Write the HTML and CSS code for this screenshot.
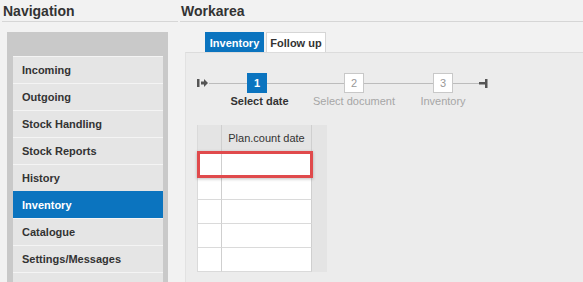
FILE: index.html
```html
<!DOCTYPE html>
<html lang="en">
<head>
    <meta charset="UTF-8">
    <title>Inventory - Workarea</title>
    <link rel="stylesheet" href="styles.css">
</head>
<body>
    <div class="layout">
        <div class="nav-column">
            <h1 class="section-title">Navigation</h1>
            <div class="nav-panel">
                <div class="nav-item">Incoming</div>
                <div class="nav-item">Outgoing</div>
                <div class="nav-item">Stock Handling</div>
                <div class="nav-item">Stock Reports</div>
                <div class="nav-item">History</div>
                <div class="nav-item active">Inventory</div>
                <div class="nav-item">Catalogue</div>
                <div class="nav-item">Settings/Messages</div>
                <div class="nav-item"></div>
            </div>
        </div>

        <div class="work-column">
            <h1 class="section-title">Workarea</h1>
            <div class="tabs">
                <div class="tab active">Inventory</div>
                <div class="tab">Follow up</div>
            </div>
            <div class="work-panel">
                <div class="stepper">
                    <svg class="step-icon" width="12" height="20" viewBox="0 0 12 20">
                        <rect x="0" y="6" width="2.5" height="8" fill="#555"/>
                        <path d="M4 8.5 H7 V6 L11 10 L7 14 V11.5 H4 Z" fill="#555"/>
                    </svg>
                    <div class="step step-1 current">
                        <div class="step-box">1</div>
                        <div class="step-label">Select date</div>
                    </div>
                    <div class="step step-2">
                        <div class="step-box">2</div>
                        <div class="step-label">Select document</div>
                    </div>
                    <div class="step step-3">
                        <div class="step-box">3</div>
                        <div class="step-label">Inventory</div>
                    </div>
                    <svg class="step-icon end" width="9" height="20" viewBox="0 0 9 20">
                        <rect x="0" y="9" width="6" height="2.5" fill="#555"/>
                        <rect x="6" y="6" width="2.5" height="9" fill="#555"/>
                    </svg>
                </div>

                <div class="grid-wrap">
                    <div class="grid">
                        <div class="cell head num"></div>
                        <div class="cell head">Plan.count date</div>
                        <div class="cell num"></div><div class="cell"></div>
                        <div class="cell num"></div><div class="cell"></div>
                        <div class="cell num"></div><div class="cell"></div>
                        <div class="cell num"></div><div class="cell"></div>
                        <div class="cell num"></div><div class="cell"></div>
                    </div>
                    <div class="highlight"></div>
                </div>
            </div>
        </div>
    </div>
</body>
</html>
```
FILE: styles.css
```css
body {
    font-family: 'Liberation Sans', Arial, sans-serif;
    background-color: #f2f2f2;
    color: #333333;
    margin: 0;
    height: 282px;
    overflow: hidden;
}
.layout {
    display: flex;
    height: 100%;
}
.section-title {
    font-size: 14px;
    font-weight: bold;
    margin: 0;
    padding: 1px 0 0 1px;
    height: 20px;
    line-height: 21px;
    color: #333333;
    border-bottom: 1px solid #d6d6d6;
}
.nav-column {
    width: 176px;
    margin-left: 2px;
    display: flex;
    flex-direction: column;
}
.nav-panel {
    margin: 10px 0 0 5px;
    width: 150px;
    padding: 24px 5px 0 6px;
    background-color: #c9c9c9;
    flex: 1;
}
.nav-item {
    height: 26px;
    line-height: 27px;
    border-top: 1px solid #f4f4f4;
    background-color: #e5e5e5;
    padding-left: 9px;
    font-size: 11px;
    font-weight: bold;
    color: #333333;
}
.nav-item.active {
    background-color: #0b74bf;
    border-top-color: #0b74bf;
    color: #ffffff;
}
.work-column {
    flex: 1;
    margin-left: 2px;
    display: flex;
    flex-direction: column;
}
.tabs {
    display: flex;
    gap: 2px;
    margin: 10px 0 0 25px;
}
.tab {
    width: 60px;
    height: 20px;
    line-height: 20px;
    font-size: 11px;
    font-weight: bold;
    text-align: center;
    background-color: #ffffff;
    color: #333333;
    border: 1px solid #d6d6d6;
    border-bottom: none;
    box-sizing: border-box;
}
.tab.active {
    background-color: #0b74bf;
    border-color: #0b74bf;
    color: #ffffff;
    width: 59px;
}
.work-panel {
    flex: 1;
    margin-left: 5px;
    padding: 20px 0 0 11px;
    background-color: #ececec;
    border-top: 1px solid #dcdcdc;
    border-left: 1px solid #e2e2e2;
}
.stepper {
    display: inline-flex;
    align-items: flex-start;
    background: linear-gradient(#bcbcbc, #bcbcbc) no-repeat 12px 10px / calc(100% - 18px) 1px;
}
.step {
    width: 70px;
    display: flex;
    flex-direction: column;
    align-items: center;
}
.step-1 { margin-left: 13px; }
.step-2 { margin-left: 27px; }
.step-3 { margin-left: 19px; }
.step-icon.end { margin-left: 1px; }
.step-box {
    width: 20px;
    height: 20px;
    box-sizing: border-box;
    border: 1px solid #c8c8c8;
    background-color: #ffffff;
    color: #999999;
    font-size: 11px;
    line-height: 18px;
    text-align: center;
}
.step.current .step-box {
    background-color: #0b74bf;
    border-color: #0b74bf;
    color: #ffffff;
    font-weight: bold;
}
.step-label {
    margin-top: 2px;
    font-size: 11px;
    line-height: 13px;
    white-space: nowrap;
    color: #a6a6a6;
}
.step.current .step-label {
    color: #333333;
    font-weight: bold;
    padding-left: 5px;
}
.grid-wrap {
    position: relative;
    margin-top: 17px;
    width: 130px;
    background-color: #e4e4e4;
}
.grid {
    display: grid;
    grid-template-columns: 25px 90px;
    grid-template-rows: 27px repeat(5, 24px);
}
.cell {
    background-color: #ffffff;
    border-bottom: 1px solid #dadada;
    border-right: 1px solid #cfcfcf;
}
.cell.num {
    border-left: 1px solid #dadada;
}
.cell.head {
    background-color: #e4e4e4;
    font-size: 11px;
    text-align: center;
    line-height: 26px;
    color: #333333;
    border-bottom-color: #dadada;
}
.highlight {
    position: absolute;
    left: 0;
    top: 26px;
    width: 116px;
    height: 27px;
    box-sizing: border-box;
    border: 3px solid #e04a4c;
    box-shadow: 0 1px 3px rgba(0, 0, 0, 0.25);
}
```
